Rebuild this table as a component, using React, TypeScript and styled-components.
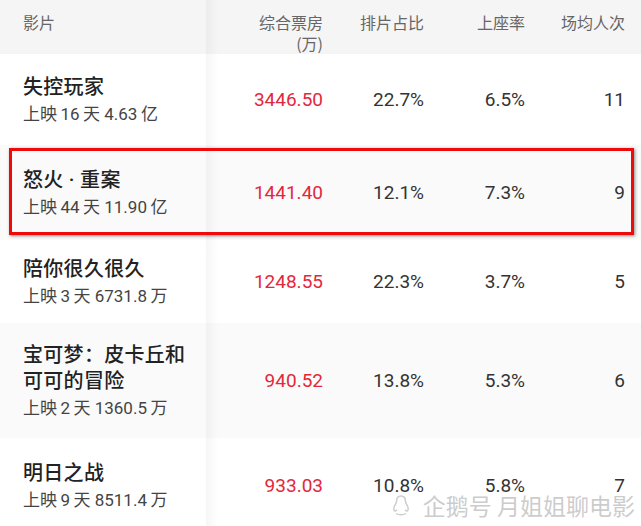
import React from "react";
import styled, { createGlobalStyle } from "styled-components";

const Global = createGlobalStyle`
  html, body { margin: 0; padding: 0; background: #fff; }
  body { width: 641px; overflow: hidden; font-family: "Noto Sans CJK SC", "Noto Sans", sans-serif; }
`;

const Table = styled.div`
  position: relative;
  width: 641px;
  height: 526px;
  overflow: hidden;
  background: #fff;
`;

const Grid = `
  display: grid;
  grid-template-columns: 206px 117px 101px 101px 100px;
  padding-right: 16px;
`;

const HeaderRow = styled.div`
  ${Grid};
  height: 54px;
  background: #f5f5f5;
`;

const HeadCell = styled.div<{ $first?: boolean }>`
  position: relative;
  padding-top: 12px;
  padding-left: ${(p) => (p.$first ? "23px" : "0")};
  text-align: ${(p) => (p.$first ? "left" : "right")};
  font-size: 16px;
  line-height: 21px;
  color: #666;
  ${(p) =>
    p.$first &&
    `&::after { content: ""; position: absolute; top: 0; bottom: 0; right: -12px; width: 12px;
      background: linear-gradient(to right, rgba(0,0,0,0.035), rgba(0,0,0,0)); }`}
`;

const HeadLine = styled.span`
  display: block;
`;

const Row = styled.div<{ $h: number; $alt?: boolean }>`
  ${Grid};
  position: relative;
  height: ${(p) => p.$h}px;
  background: ${(p) => (p.$alt ? "#fafafa" : "#fff")};
  align-items: center;
`;

const NameCell = styled.div`
  position: relative;
  align-self: stretch;
  display: flex;
  flex-direction: column;
  justify-content: center;
  padding-left: 23px;
  &::after {
    content: "";
    position: absolute;
    top: 0;
    bottom: 0;
    right: -12px;
    width: 12px;
    background: linear-gradient(to right, rgba(0, 0, 0, 0.035), rgba(0, 0, 0, 0));
  }
`;

const Title = styled.div`
  font-family: Roboto, "Noto Sans CJK SC", sans-serif;
  font-size: 20px;
  line-height: 26px;
  font-weight: 500;
  color: #222;
  letter-spacing: 0.3px;
`;

const Sub = styled.div`
  margin-top: 3px;
  font-family: Roboto, "Noto Sans CJK SC", sans-serif;
  font-size: 17px;
  line-height: 22px;
  color: #444;
`;

const Num = styled.div<{ $red?: boolean }>`
  text-align: right;
  font-family: Roboto, "Noto Sans", sans-serif;
  font-size: 19px;
  color: ${(p) => (p.$red ? "#e2283a" : "#333")};
  font-weight: 400;
`;

const Highlight = styled.div`
  position: absolute;
  top: 3px;
  bottom: 5px;
  left: 9px;
  right: 7px;
  border: 3px solid #ee0a0a;
  box-shadow: 1px 1px 3px rgba(0, 0, 0, 0.45);
  pointer-events: none;
`;

const Watermark = styled.div`
  position: absolute;
  right: 6px;
  bottom: 8px;
  display: flex;
  align-items: center;
  gap: 13px;
  color: rgba(195, 195, 195, 0.85);
  font-size: 23px;
  line-height: 26px;
  font-family: "Noto Sans CJK SC", sans-serif;
  text-shadow: 0 0 2px #fff;
`;

type Film = {
  title: string[];
  sub: string;
  box: string;
  ratio: string;
  seat: string;
  avg: string;
  h: number;
};

const T = "\u2009";

const films: Film[] = [
  { title: ["失控玩家"], sub: `上映${T}16${T}天 4.63${T}亿`, box: "3446.50", ratio: "22.7%", seat: "6.5%", avg: "11", h: 91 },
  { title: ["怒火 · 重案"], sub: `上映${T}44${T}天 11.90${T}亿`, box: "1441.40", ratio: "12.1%", seat: "7.3%", avg: "9", h: 95 },
  { title: ["陪你很久很久"], sub: `上映${T}3${T}天 6731.8${T}万`, box: "1248.55", ratio: "22.3%", seat: "3.7%", avg: "5", h: 83 },
  { title: ["宝可梦：皮卡丘和", "可可的冒险"], sub: `上映${T}2${T}天 1360.5${T}万`, box: "940.52", ratio: "13.8%", seat: "5.3%", avg: "6", h: 115 },
  { title: ["明日之战"], sub: `上映${T}9${T}天 8511.4${T}万`, box: "933.03", ratio: "10.8%", seat: "5.8%", avg: "7", h: 95 },
];

const Penguin = () => (
  <svg width="18" height="22" viewBox="0 0 18 22" fill="none" stroke="rgba(200,200,200,0.9)" strokeWidth="1.5">
    <path d="M9 2c3 0 4.5 2.5 4.5 5.5 0 1.5 1 2.5 2 4.5 1 2.2 1 4.5-.5 5-1 .3-1.5-.5-2-1.2M9 2C6 2 4.5 4.5 4.5 7.5c0 1.5-1 2.5-2 4.5-1 2.2-1 4.5.5 5 1 .3 1.5-.5 2-1.2" />
    <path d="M4 19.5c1.5 1 3 1.3 5 1.3s3.5-.3 5-1.3" />
  </svg>
);

export default function App() {
  return (
    <>
      <Global />
      <Table>
        <HeaderRow>
          <HeadCell $first>影片</HeadCell>
          <HeadCell>
            <HeadLine>综合票房</HeadLine>
            <HeadLine>(万)</HeadLine>
          </HeadCell>
          <HeadCell>排片占比</HeadCell>
          <HeadCell>上座率</HeadCell>
          <HeadCell>场均人次</HeadCell>
        </HeaderRow>
        {films.map((f, i) => (
          <Row key={i} $h={f.h} $alt={i % 2 === 1}>
            <NameCell>
              {f.title.map((t) => (
                <Title key={t}>{t}</Title>
              ))}
              <Sub>{f.sub}</Sub>
            </NameCell>
            <Num $red>{f.box}</Num>
            <Num>{f.ratio}</Num>
            <Num>{f.seat}</Num>
            <Num>{f.avg}</Num>
            {i === 1 && <Highlight />}
          </Row>
        ))}
        <Watermark>
          <Penguin />
          <span>企鹅号 月姐姐聊电影</span>
        </Watermark>
      </Table>
    </>
  );
}
